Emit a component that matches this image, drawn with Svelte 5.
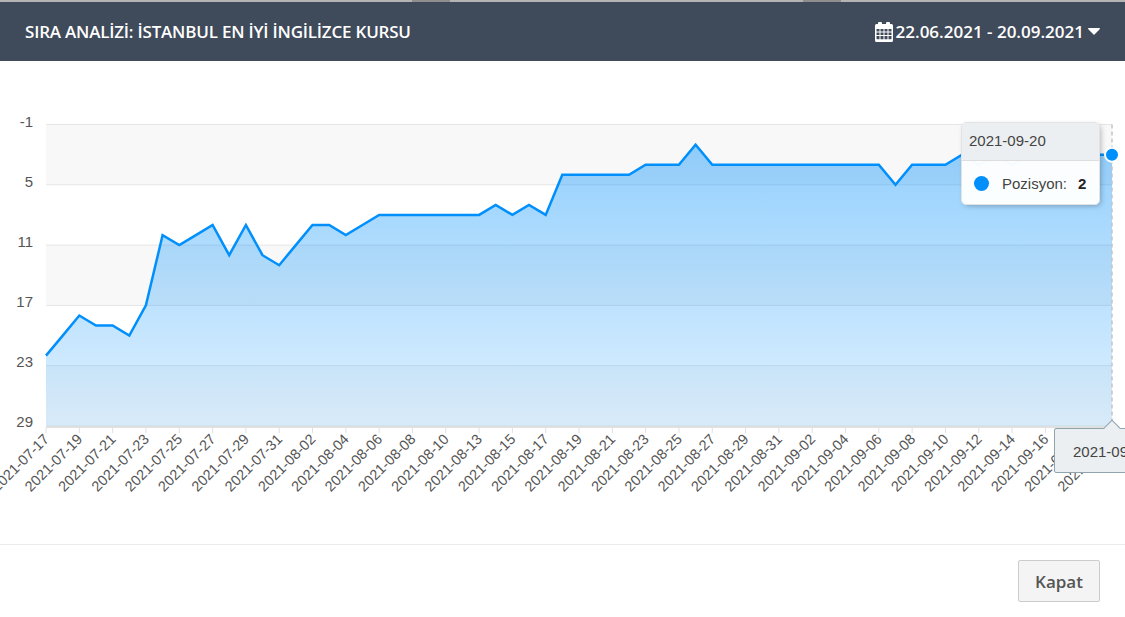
<script>
  const left = 46, right = 1112, plotTop = 124.5, plotBottom = 426;
  const stepX = (right - left) / 64;
  const stepY = (plotBottom - plotTop) / 30;

  // rank per day, 08-12 has no data
  const ranks = [22,20,18,19,19,20,17,10,11,10,9,12,9,12,13,11,9,9,10,9,8,8,8,8,8,8,8,7,8,7,8,4,4,4,4,4,3,3,3,1,3,3,3,3,3,3,3,3,3,3,3,5,3,3,3,2,3,2,3,2,2,2,2,2,2];

  const toX = (i) => left + i * stepX;
  const toY = (v) => plotTop + (v + 1) * stepY;

  const pad = (n) => String(n).padStart(2, "0");
  const dates = [];
  let d = new Date(Date.UTC(2021, 6, 17));
  while (dates.length < 65) {
    const s = d.getUTCFullYear() + "-" + pad(d.getUTCMonth() + 1) + "-" + pad(d.getUTCDate());
    if (s != "2021-08-12") dates.push(s);
    d = new Date(d.getTime() + 86400000);
  }

  const line = ranks.map((v, i) => toX(i).toFixed(1) + "," + toY(v).toFixed(1)).join(" ");
  const area = "M" + left + "," + plotBottom + " L" + line + " L" + right + "," + plotBottom + " Z";
  const yLabels = [-1, 5, 11, 17, 23, 29];
  const bands = [0, 2, 4];
  const ticks = dates.map((s, i) => ({ s, x: toX(i) })).filter((t, i) => i % 2 == 0);
</script>

<div class="page">
  <div class="topstrip"></div>
  <header>
    <div class="title">SIRA ANALİZİ: İSTANBUL EN İYİ İNGİLİZCE KURSU</div>
    <div class="range">
      <svg class="cal" viewBox="0 0 18 20" width="18" height="20">
        <path fill="#fff" fill-rule="evenodd" d="M4 0h2a1 1 0 0 1 1 1v1h4V1a1 1 0 0 1 1-1h2a1 1 0 0 1 1 1v1h1.500A1.500 1.500 0 0 1 18 3.500v15a1.500 1.500 0 0 1-1.500 1.500h-15A1.500 1.500 0 0 1 0 18.500v-15A1.500 1.500 0 0 1 1.500 2H3V1a1 1 0 0 1 1-1zM1.500 7v2.500h3V7zm4 0v2.500h3V7zm4 0v2.500h3V7zm4 0v2.500h3V7zm-12 3.500V13h3v-2.500zm4 0V13h3v-2.500zm4 0V13h3v-2.500zm4 0V13h3v-2.500zm-12 3.500v2.500c0 .600.300.800.800.800h2.200V14zm4 0v3.300h3V14zm4 0v3.300h3V14zm4 0v3.300h2.200c.500 0 .800-.200.800-.800V14z"/>
      </svg>
      <span>22.06.2021 - 20.09.2021</span>
      <svg class="caret" viewBox="0 0 12 7" width="12" height="7"><path fill="#fff" d="M.8 0h10.400c.700 0 1 .800.500 1.300L6.500 6.600c-.300.300-.700.300-1 0L.3 1.300C-.2.800.1 0 .8 0z"/></svg>
    </div>
  </header>

  <div class="chart">
    <svg class="plot" width="1125" height="483" viewBox="0 61 1125 483">
      <defs>
        <linearGradient id="fade" x1="0" y1="0" x2="0" y2="1">
          <stop offset="0" stop-color="#008ffb" stop-opacity="0.42" />
          <stop offset="1" stop-color="#008ffb" stop-opacity="0.13" />
        </linearGradient>
      </defs>

      {#each bands as b}
        <rect x={left} y={plotTop + b * 60.3} width={right - left} height="60.3" fill="#f8f8f8" />
      {/each}
      {#each yLabels as v}
        <line x1={left} x2={right} y1={toY(v)} y2={toY(v)} stroke="#e6e6e6" />
        <text class="ylabel" x="33" y={toY(v) + 2 - (v + 1) * 0.05}>{v}</text>
      {/each}

      <path d={area} fill="url(#fade)" />
      <polyline points={line} fill="none" stroke="#008ffb" stroke-width="2.500" />

      <line x1={left} x2={right} y1="427" y2="427" stroke="#e0e0e0" stroke-width="2" />
      {#each ticks as t}
        <line x1={t.x} x2={t.x} y1="427" y2="433" stroke="#e0e0e0" />
        <text class="xlabel" transform="translate({t.x + 4} 440) rotate(-45)">{t.s}</text>
      {/each}

      <line x1={right} x2={right} y1={plotTop} y2={plotBottom} stroke="#c4c4c4" stroke-width="1.500" stroke-dasharray="4 3" />
      <circle cx={right} cy={toY(2)} r="7" fill="#008ffb" stroke="#fff" stroke-width="2" />
    </svg>

    <div class="tip">
      <div class="tip-head">2021-09-20</div>
      <div class="tip-body">
        <span class="dot"></span>
        <span class="tip-name">Pozisyon:</span>
        <b>2</b>
      </div>
    </div>

    <div class="xtip">2021-09-20</div>
  </div>

  <footer>
    <button>Kapat</button>
  </footer>
</div>

<style>
  :global(body) {
    margin: 0;
    background: #fff;
    overflow: hidden;
  }

  .page {
    width: 1125px;
    height: 617px;
    display: flex;
    flex-direction: column;
    overflow: hidden;
    font-family: "Open Sans", sans-serif;
  }

  .topstrip {
    height: 2px;
    background: linear-gradient(90deg, #b4b4b4 412px, #8e8e8e 412px, #8e8e8e 450px, #b4b4b4 450px, #b4b4b4 803px, #8e8e8e 803px, #8e8e8e 841px, #b4b4b4 841px);
  }

  header {
    height: 59px;
    background: #3f4a5a;
    color: #fff;
    display: flex;
    justify-content: space-between;
    align-items: center;
    padding: 0 25px 0 25px;
    font-weight: 600;
    font-size: 17px;
  }

  .title {
    letter-spacing: -0.2px;
  }

  .range {
    display: flex;
    align-items: center;
    gap: 3px;
  }

  .caret {
    margin-left: 1px;
  }

  .chart {
    position: relative;
    height: 483px;
    border-bottom: 1px solid #eaeaea;
    box-sizing: content-box;
    overflow: hidden;
    font-family: "Liberation Sans", Arial, sans-serif;
  }

  .plot {
    display: block;
  }

  .ylabel {
    font-size: 15px;
    fill: #555;
    text-anchor: end;
  }

  .xlabel {
    font-size: 14.5px;
    fill: #555;
    text-anchor: end;
  }

  .tip {
    position: absolute;
    left: 961px;
    top: 61px;
    width: 139px;
    height: 83px;
    border-radius: 5px;
    background: rgba(255, 255, 255, 0.96);
    box-shadow: 2px 2px 6px -2px rgba(0, 0, 0, 0.35);
    border: 1px solid #e3e3e3;
    box-sizing: border-box;
    font-size: 15px;
    color: #444;
    overflow: hidden;
  }

  .tip-head {
    height: 37px;
    line-height: 36px;
    padding-left: 7px;
    background: #eceff1;
    border-bottom: 1px solid #ddd;
  }

  .tip-body {
    display: flex;
    align-items: center;
    height: 44px;
    padding-left: 12px;
  }

  .dot {
    width: 15px;
    height: 15px;
    border-radius: 50%;
    background: #008ffb;
    margin-right: 13px;
  }

  .tip-name {
    margin-right: 11px;
  }

  .tip-body b {
    color: #222;
  }

  .xtip {
    position: absolute;
    left: 1054px;
    top: 367px;
    width: 116px;
    height: 45px;
    line-height: 45px;
    box-sizing: border-box;
    padding-left: 18px;
    background: #eceff1;
    border: 1px solid #90a4ae;
    border-radius: 2px;
    font-size: 15px;
    color: #444;
  }

  .xtip::before {
    content: "";
    position: absolute;
    left: 51px;
    top: -7px;
    width: 11px;
    height: 11px;
    background: #eceff1;
    border-left: 1px solid #90a4ae;
    border-top: 1px solid #90a4ae;
    transform: rotate(45deg);
  }

  footer {
    flex: 1;
    display: flex;
    justify-content: flex-end;
    align-items: flex-start;
    padding: 15px 25px 0 0;
  }

  button {
    width: 82px;
    height: 42px;
    background: #f4f4f4;
    border: 1px solid #ccc;
    border-radius: 2px;
    color: #555;
    font-family: "Open Sans", sans-serif;
    font-weight: 600;
    font-size: 17px;
    padding: 0;
  }
</style>
